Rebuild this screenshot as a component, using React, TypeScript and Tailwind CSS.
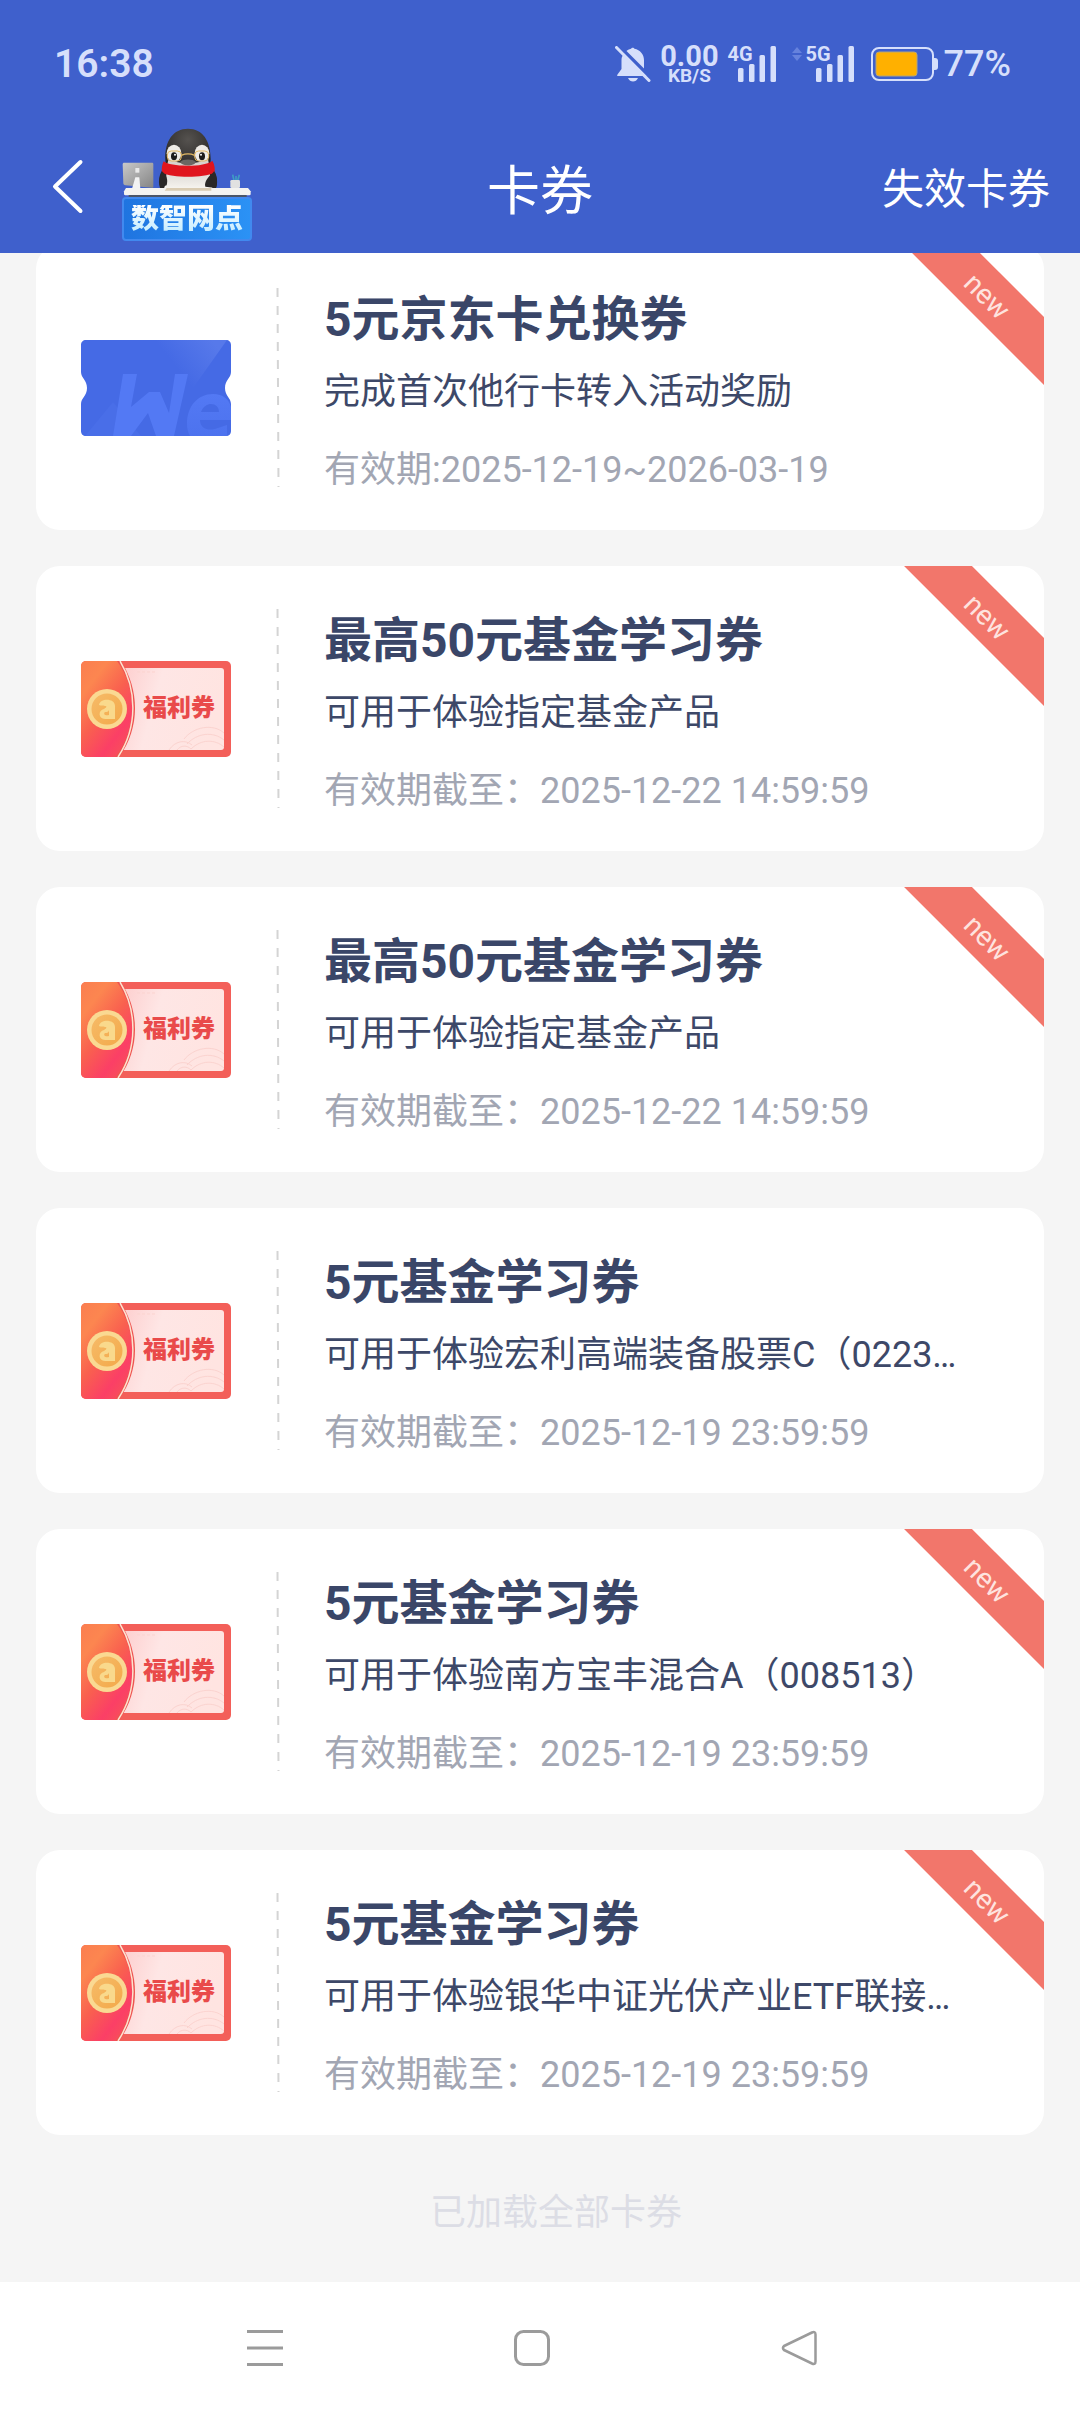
import React from "react";

type Coupon = {
  id: number;
  kind: "exchange" | "welfare";
  title: string;
  description: string;
  validity: string;
  isNew: boolean;
};

const coupons: Coupon[] = [
  { id: 1, kind: "exchange", title: "5元京东卡兑换券", description: "完成首次他行卡转入活动奖励", validity: "有效期:2025-12-19~2026-03-19", isNew: true },
  { id: 2, kind: "welfare", title: "最高50元基金学习券", description: "可用于体验指定基金产品", validity: "有效期截至：2025-12-22 14:59:59", isNew: true },
  { id: 3, kind: "welfare", title: "最高50元基金学习券", description: "可用于体验指定基金产品", validity: "有效期截至：2025-12-22 14:59:59", isNew: true },
  { id: 4, kind: "welfare", title: "5元基金学习券", description: "可用于体验宏利高端装备股票C（0223…", validity: "有效期截至：2025-12-19 23:59:59", isNew: false },
  { id: 5, kind: "welfare", title: "5元基金学习券", description: "可用于体验南方宝丰混合A（008513）", validity: "有效期截至：2025-12-19 23:59:59", isNew: true },
  { id: 6, kind: "welfare", title: "5元基金学习券", description: "可用于体验银华中证光伏产业ETF联接…", validity: "有效期截至：2025-12-19 23:59:59", isNew: true },
];

function BellOffIcon() {
  return (
    <svg width="36" height="36" viewBox="0 0 36 36" fill="none" aria-label="静音">
      <path d="M8 9C10 5.500 13 3.500 16 2.800C16.500 1.300 19 1.300 19.500 2.800C25 4 29 8.500 29 14V25L33 30H2.500C2 30 2 29 2.500 28.500L6.500 23V14C6.500 12 7 10.500 8 9Z" fill="#d6dffb" />
      <path d="M13 32H23C22 34.500 20 35.500 18 35.500C16 35.500 14 34.500 13 32Z" fill="#d6dffb" />
      <path d="M3.500 -0.500L36 32" stroke="#3f60cc" strokeWidth="3.500" />
      <path d="M1.500 1.500L34 34.500" stroke="#d6dffb" strokeWidth="3" strokeLinecap="round" />
    </svg>
  );
}

function Signal({ label }: { label: string }) {
  return (
    <div className="relative h-9 w-12">
      <span className="absolute -top-px left-0 text-[20px] leading-[18px] font-bold">{label}</span>
      <svg className="h-9 w-12" viewBox="0 0 48 36" fill="#d6dffb" aria-hidden="true">
        <rect x="10" y="22" width="5.500" height="14" rx="1.500" />
        <rect x="21" y="18" width="5.500" height="18" rx="1.500" />
        <rect x="31.500" y="9" width="5.500" height="27" rx="1.500" />
        <rect x="42.500" y="0" width="5.500" height="36" rx="1.500" />
      </svg>
    </div>
  );
}

function BatteryIcon() {
  return (
    <svg width="67" height="34" viewBox="0 0 67 34" fill="none" aria-label="电池">
      <rect x="1" y="1" width="61" height="32" rx="7" stroke="#d6dffb" strokeWidth="2" />
      <path d="M63 11H64C66 11 67 12 67 14V20C67 22 66 23 64 23H63Z" fill="#d6dffb" />
      <rect x="5" y="5" width="41" height="24" rx="3" fill="#ffb000" stroke="#b5a578" strokeWidth="1" />
    </svg>
  );
}

function StatusBar() {
  return (
    <div className="flex h-32 items-center justify-between pr-[69px] pl-[54px] font-medium text-[#d6dffb]">
      <time className="text-[39px] leading-none font-semibold">16:38</time>
      <div className="flex items-center">
        <BellOffIcon />
        <div className="ml-[9px] flex flex-col items-center">
          <span className="text-[29px] leading-6 font-bold">0.00</span>
          <span className="text-[19px] leading-4 font-bold">KB/S</span>
        </div>
        <div className="ml-[9px]">
          <Signal label="4G" />
        </div>
        <svg className="mr-1 mb-5 ml-4" width="10" height="14" viewBox="0 0 10 14" fill="#6682dd" aria-hidden="true">
          <path d="M5 0L10 6H0Z" />
          <path d="M5 14L0 8H10Z" />
        </svg>
        <Signal label="5G" />
        <div className="mr-[6px] ml-[17px]">
          <BatteryIcon />
        </div>
        <span className="text-[36px] leading-none">77%</span>
      </div>
    </div>
  );
}

function PenguinDesk() {
  return (
    <svg className="w-[130px]" viewBox="66 24 390 208" fill="none" aria-hidden="true">
      <defs>
        <linearGradient id="screen" x1="0" y1="0" x2="1" y2="1">
          <stop offset="0" stopColor="#c9c9c9" />
          <stop offset="1" stopColor="#858585" />
        </linearGradient>
        <radialGradient id="head" cx="0.500" cy="0.250" r="0.700">
          <stop offset="0" stopColor="#55524f" />
          <stop offset="1" stopColor="#262423" />
        </radialGradient>
        <linearGradient id="belly" x1="0" y1="0" x2="0" y2="1">
          <stop offset="0" stopColor="#d9d6d2" />
          <stop offset="1" stopColor="#f6f3ee" />
        </linearGradient>
      </defs>
      <path d="M196 140C180 152 172 180 180 204H348C356 180 348 152 332 140Z" fill="#2a2827" />
      <path d="M200 150H328C332 170 330 188 338 205H192C200 188 198 170 200 150Z" fill="url(#belly)" />
      <path d="M196 118C194 62 220 26 264 26C308 26 332 62 332 118C332 150 300 158 264 158C226 158 196 150 196 118Z" fill="url(#head)" />
      <ellipse cx="222" cy="100" rx="22" ry="26" fill="#eeebe6" />
      <ellipse cx="306" cy="100" rx="22" ry="26" fill="#eeebe6" />
      <path d="M206 116C226 134 300 134 324 116L328 140H200Z" fill="#d8d3cd" />
      <ellipse cx="222" cy="109" rx="9" ry="12" fill="#1c1b1b" />
      <ellipse cx="306" cy="109" rx="9" ry="12" fill="#1c1b1b" />
      <circle cx="225" cy="104" r="3" fill="#ffffff" />
      <circle cx="303" cy="104" r="3" fill="#ffffff" />
      <path d="M240 126C248 116 280 116 288 126C282 140 246 140 240 126Z" fill="#6b6763" />
      <path d="M244 106C256 101 272 101 284 106" stroke="#e3b964" strokeWidth="4" />
      <rect x="202" y="93" width="42" height="30" rx="12" stroke="#e3b964" strokeWidth="3" />
      <rect x="284" y="93" width="42" height="30" rx="12" stroke="#e3b964" strokeWidth="3" />
      <path d="M191 124C210 142 318 142 337 122C344 134 346 148 343 158C310 174 218 174 186 158C184 146 186 134 191 124Z" fill="#e0151e" />
      <path d="M186 154C178 170 176 190 182 202L200 196C204 180 200 168 192 160Z" fill="#2a2827" />
      <path d="M342 154C352 170 354 190 348 204L316 200C312 186 326 168 338 160Z" fill="#2a2827" />
      <path d="M72 128H156C159 128 160 130 160 132V200C160 202 158 204 156 203L76 196C72 195 70 193 70 190L68 133C68 130 70 128 72 128Z" fill="url(#screen)" />
      <path d="M106 144H118V158H106Z" fill="#e9e9e9" />
      <path d="M106 172H118L121 206H96Z" fill="#f3f3f3" />
      <path d="M402 182L398 164M408 182V168M413 182L418 164" stroke="#3f9cc4" strokeWidth="5" />
      <rect x="391" y="180" width="29" height="24" rx="4" fill="#e1e1e1" />
      <path d="M78 204H444L452 214V222C452 225 449 226 446 226H78C75 226 72 225 72 222V214Z" fill="#f4f3f1" />
      <path d="M200 204H334V212H194Z" fill="#d9cbb2" />
      <rect x="86" y="225" width="354" height="7" fill="#4b5568" />
    </svg>
  );
}

function AppHeader() {
  return (
    <header className="relative z-10 bg-[#3f60cc]">
      <StatusBar />
      <div className="grid h-[125px] grid-cols-[1fr_auto_1fr] items-start px-[30px] text-white">
        <div className="flex items-start pl-[18px]">
          <button type="button" aria-label="返回" className="mt-[27px] mr-9">
            <svg width="38" height="64" viewBox="0 0 38 64" fill="none" aria-hidden="true">
              <path d="M32.500 7L7 31.500L32.500 56" stroke="#ffffff" strokeWidth="4" strokeLinecap="round" strokeLinejoin="round" />
            </svg>
          </button>
          <a href="#branch" className="flex w-[130px] flex-col">
            <PenguinDesk />
            <span className="flex h-11 items-center justify-center rounded-sm border-2 border-[#4189ef] bg-linear-to-r from-[#1f74e0] to-[#2b92f5] text-[28px] leading-none font-black [font-style:oblique_8deg]">
              <span className="bg-linear-to-b from-white to-[#c3ecff] bg-clip-text text-transparent">数智网点</span>
            </span>
          </a>
        </div>
        <h1 className="mt-8 text-[53px] leading-[64px]">卡券</h1>
        <a href="#expired" className="mt-[30px] justify-self-end text-[42px] leading-[64px]">失效卡券</a>
      </div>
    </header>
  );
}

function ExchangeTicket() {
  return (
    <svg width="150" height="96" viewBox="0 0 150 96" aria-hidden="true">
      <defs>
        <clipPath id="exchange-shape">
          <path d="M5 0H145C148 0 150 2 150 5V32C150 38 144 40 144 48C144 56 150 58 150 64V91C150 94 148 96 145 96H5C2 96 0 94 0 91V64C0 58 6 56 6 48C6 40 0 38 0 32V5C0 2 2 0 5 0Z" />
        </clipPath>
        <linearGradient id="exchange-shine" x1="0.300" y1="0.500" x2="0.900" y2="0.200">
          <stop offset="0" stopColor="#456ae5" />
          <stop offset="1" stopColor="#5779ea" />
        </linearGradient>
        <linearGradient id="exchange-we" x1="0" y1="0" x2="0" y2="1">
          <stop offset="0" stopColor="#5379f4" />
          <stop offset="1" stopColor="#4c72ee" />
        </linearGradient>
      </defs>
      <g clipPath="url(#exchange-shape)">
        <rect width="150" height="96" fill="#456ae5" />
        <path d="M70 0H146L112 48H70Z" fill="url(#exchange-shine)" />
        <path d="M4 96L32 62L60 96Z" fill="#496ee8" />
        <path d="M42 34H56L50 67L68 52H79L88 73L94 34H107L93 96H75L67 73L50 96H32Z" fill="#5379f4" />
        <path d="M106 84C106 66 117 54 132 54C147 54 153 66 150 80H119C119 88 126 91 134 89L146 85V100H112C108 96 106 90 106 84ZM120 72H138C138 62 124 61 120 72Z" fill="url(#exchange-we)" fillRule="evenodd" />
      </g>
    </svg>
  );
}

function WelfareTicket() {
  return (
    <svg width="150" height="96" viewBox="0 0 150 96" role="img" aria-label="福利券">
      <defs>
        <linearGradient id="welfare-left" x1="0" y1="0" x2="0.700" y2="1">
          <stop offset="0" stopColor="#fb7e50" />
          <stop offset="0.250" stopColor="#fc8650" />
          <stop offset="0.550" stopColor="#f9604f" />
          <stop offset="0.850" stopColor="#fb3f66" />
          <stop offset="1" stopColor="#f84c5c" />
        </linearGradient>
        <linearGradient id="welfare-panel" x1="0" y1="0" x2="1" y2="0.200">
          <stop offset="0" stopColor="#fdc8c8" />
          <stop offset="0.450" stopColor="#fee6e5" />
          <stop offset="1" stopColor="#ffe4e1" />
        </linearGradient>
        <linearGradient id="welfare-coin" x1="0" y1="0" x2="1" y2="1">
          <stop offset="0" stopColor="#f6bb68" />
          <stop offset="1" stopColor="#f3a94a" />
        </linearGradient>
        <clipPath id="welfare-shape">
          <rect width="150" height="96" rx="5" />
        </clipPath>
      </defs>
      <g clipPath="url(#welfare-shape)">
        <rect width="150" height="96" fill="#f35f59" />
        <rect x="30" y="7" width="113" height="82" rx="3" fill="url(#welfare-panel)" />
        <g fill="none" stroke="#fbd3cf" strokeWidth="1">
          <path d="M88 89C94 80 104 78 111 84M96 89C100 84 106 84 110 88" />
          <path d="M103 78C112 66 132 62 143 72M106 83C116 72 132 70 143 79M110 88C120 78 134 78 143 86" />
          <path d="M56 11H75" strokeDasharray="3 2" />
        </g>
        <path d="M40 0C58 28 60 66 38 96H34V0Z" fill="#ee5450" />
        <path d="M0 0H36C56 28 57 66 34 96H0Z" fill="url(#welfare-left)" />
        <path d="M39 0C56 28 57 66 37 96" fill="none" stroke="#fde2cf" strokeWidth="1.500" />
        <circle cx="26" cy="48" r="20" fill="#fad992" />
        <circle cx="26" cy="48" r="15.500" fill="url(#welfare-coin)" />
        <path d="M18 44C19 37 34 37 34 45V58H24C17 58 17 49 23 48C26 46 26 45 24 45C22 44 20 45 18 44ZM24 51C22 53 24 55 28 54V49C27 51 26 51 24 51Z" fill="#f9d98c" fillRule="evenodd" />
      </g>
      <text x="62" y="55" fontSize="24" fontWeight="900" fill="#e94a4a">福利券</text>
    </svg>
  );
}

function CouponCard({ coupon }: { coupon: Coupon }) {
  return (
    <li className="relative flex h-[285px] items-center overflow-hidden rounded-3xl bg-white pr-[72px] pl-[45px]">
      <div className="shrink-0">{coupon.kind === "exchange" ? <ExchangeTicket /> : <WelfareTicket />}</div>
      <svg className="mr-11 ml-[45px] shrink-0" width="4" height="199" viewBox="0 0 4 199" aria-hidden="true">
        <path d="M1.500 0L2.500 199" stroke="#d4d4d4" strokeWidth="2" strokeDasharray="9 9" />
      </svg>
      <div className="min-w-0 flex-1 pt-4">
        <h2 className="truncate text-[48px] leading-[68px] font-bold text-[#3a4668]">{coupon.title}</h2>
        <p className="mt-1 truncate text-[36px] leading-[68px] text-[#3d4868]">{coupon.description}</p>
        <p className="mt-2 truncate text-[36px] leading-[72px] text-[#a2a6b3]">{coupon.validity}</p>
      </div>
      {coupon.isNew && (
        <span className="absolute top-[29px] -right-[57px] flex h-12 w-[220px] rotate-45 items-center justify-center bg-[#f2766b] pt-1 pr-2 text-[28px] text-[#fee3df]">
          new
        </span>
      )}
    </li>
  );
}

function SystemNav() {
  return (
    <nav aria-label="系统导航" className="grid h-[132px] grid-cols-3 items-center justify-items-center bg-white pr-[148px] pl-[131px]">
      <button type="button" aria-label="菜单">
        <svg width="36" height="36" viewBox="0 0 36 36" stroke="#9b9b9b" strokeWidth="3" aria-hidden="true">
          <path d="M0 1.500H36M0 18H36M0 34.500H36" />
        </svg>
      </button>
      <button type="button" aria-label="主屏幕">
        <svg width="36" height="36" viewBox="0 0 36 36" fill="none" stroke="#9b9b9b" strokeWidth="3" aria-hidden="true">
          <rect x="1.500" y="1.500" width="33" height="33" rx="8" />
        </svg>
      </button>
      <button type="button" aria-label="后退">
        <svg width="36" height="36" viewBox="0 0 36 36" fill="none" stroke="#9b9b9b" strokeWidth="2.500" strokeLinejoin="round" aria-hidden="true">
          <path d="M31 2.500L3 16Q1 18 3 20L31 33.500Q34.500 35 34.500 31.500V4.500Q34.500 1 31 2.500Z" />
        </svg>
      </button>
    </nav>
  );
}

export default function App() {
  return (
    <div className="flex min-h-screen flex-col bg-[#f5f5f5] font-[Roboto,'Noto_Sans_CJK_SC',sans-serif]" lang="zh-CN">
      <AppHeader />
      <main className="-mt-2 flex flex-1 flex-col px-9">
        <ul className="flex flex-col gap-9">
          {coupons.map((coupon) => (
            <CouponCard key={coupon.id} coupon={coupon} />
          ))}
        </ul>
        <p className="mt-[51px] pl-8 text-center text-[36px] leading-[54px] text-[#dcdde5]">已加载全部卡券</p>
      </main>
      <SystemNav />
    </div>
  );
}
